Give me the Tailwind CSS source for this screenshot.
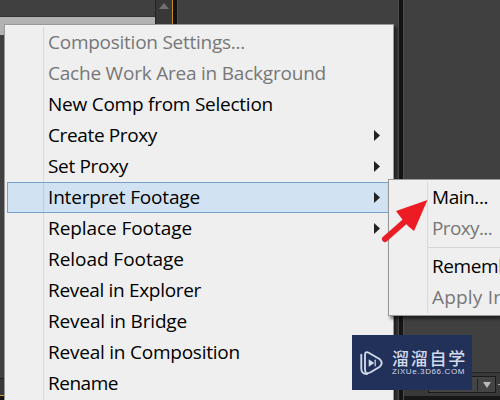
<!DOCTYPE html>
<html lang="en"><head><meta charset="utf-8"><title>Footage menu</title>
<script src="https://cdn.jsdelivr.net/npm/@tailwindcss/browser@4"></script></head>
<body class="relative h-[400px] w-[500px] overflow-hidden bg-[#404040] font-['Open_Sans','Noto_Sans',sans-serif]">
<div class="flex h-full w-full">
  <div class="flex w-[155px] shrink-0 flex-col">
    <div class="h-[17px] border-b border-[#343434]"></div>
    <div class="h-[18px] bg-[#b2b2b2]"></div>
    <div class="grow bg-[#404040]"></div>
    <div class="h-[17px] border-t border-[#222] bg-[#393939]"></div>
    <div class="h-px bg-[#c5a52c]"></div><div class="h-1 bg-[#171412]"></div>
  </div>
  <div class="w-[17px] shrink-0 border-l border-[#242424] bg-[#383838] pl-[3px] pt-[3px]"><svg class="h-[6px] w-[10px]" viewBox="0 0 10 6"><path d="M5 0 10 6H0z" fill="#707070"/></svg></div>
  <div class="w-[5px] shrink-0 border-l border-[#c28b25] bg-[#15110d]"></div>
  <div class="w-[222px] shrink-0 border-x border-[#4d4d4d] bg-[#404040]"></div>
  <div class="w-[4px] shrink-0 bg-[#141414]"></div>
  <div class="flex w-[97px] shrink-0 flex-col border-l border-[#4d4d4d]">
    <div class="grow"></div>
    <div class="flex h-[24px] items-center border-t border-[#242424] bg-[#393939] pl-[24px]">
      <div class="flex h-[17px] w-[68px] shrink-0 items-center justify-end border border-[#1b1b1b] bg-[#444]"><span class="h-[12px] border-l border-[#222]"></span><svg class="ml-[5px] mr-[4px] h-[6px] w-[8px]" viewBox="0 0 8 6"><path d="M0 0H8L4 6z" fill="#bbb"/></svg></div><span class="ml-[2px] h-px w-[2px] bg-[#aaa]"></span>
    </div>
    <div class="h-[4px] bg-[#171717]"></div>
  </div>
</div>

<div class="absolute left-[4px] top-[24px] h-[376px] w-[390px] border border-b-0 border-[#999] bg-[#efefef] pt-[2px] text-[19px] leading-[31px] [font-stretch:93%] whitespace-nowrap text-black shadow-[3px_3px_3px_rgba(0,0,0,0.5)]">
  <div class="absolute bottom-0 left-[38px] top-[2px] w-px bg-[#d5d8da]"></div>
  <div class="h-[31px] pl-[43px] text-[#777]"><span data-w="197">Composition Settings...</span></div>
  <div class="h-[31px] pl-[43px] text-[#777]"><span data-w="278">Cache Work Area in Background</span></div>
  <div class="h-[31px] pl-[43px]"><span data-w="225">New Comp from Selection</span></div>
  <div class="flex h-[31px] items-center justify-between pl-[43px] pr-[13px]"><span data-w="109">Create Proxy</span><svg class="h-[11px] w-[6px]" viewBox="0 0 6 11"><path d="M0 0 6 5.5 0 11z" fill="#222"/></svg></div>
  <div class="flex h-[31px] items-center justify-between pl-[43px] pr-[13px]"><span data-w="80">Set Proxy</span><svg class="h-[11px] w-[6px]" viewBox="0 0 6 11"><path d="M0 0 6 5.5 0 11z" fill="#222"/></svg></div>
  <div class="relative ml-[2px] flex h-[31px] items-center justify-between border border-[#789fc9] bg-[#d1e2f3] pl-[40px] pr-[12px]"><i class="absolute bottom-0 left-[35px] top-0 w-px bg-[#b8cbe0]"></i><span data-w="152">Interpret Footage</span><svg class="h-[11px] w-[6px]" viewBox="0 0 6 11"><path d="M0 0 6 5.5 0 11z" fill="#222"/></svg></div>
  <div class="flex h-[31px] items-center justify-between pl-[43px] pr-[13px]"><span data-w="144">Replace Footage</span><svg class="h-[11px] w-[6px]" viewBox="0 0 6 11"><path d="M0 0 6 5.5 0 11z" fill="#222"/></svg></div>
  <div class="h-[31px] pl-[43px]"><span data-w="136">Reload Footage</span></div>
  <div class="h-[31px] pl-[43px]"><span data-w="153">Reveal in Explorer</span></div>
  <div class="h-[31px] pl-[43px]"><span data-w="139">Reveal in Bridge</span></div>
  <div class="h-[31px] pl-[43px]"><span data-w="192">Reveal in Composition</span></div>
  <div class="pl-[43px]"><span data-w="70">Rename</span></div>
</div>

<div class="absolute left-[388px] top-[179px] h-[137px] w-[112px] overflow-hidden border border-r-0 border-[#999] bg-[#efefef] pt-[2px] text-[19px] leading-[31px] [font-stretch:93%] whitespace-nowrap text-black shadow-[2px_3px_3px_rgba(0,0,0,0.5)]">
  <div class="absolute bottom-[2px] left-[38px] top-[2px] w-px bg-[#d5d8da]"></div>
  <div class="h-[31px] pl-[43px]"><span data-w="56">Main...</span></div>
  <div class="h-[31px] pl-[43px] text-[#777]"><span data-w="60">Proxy...</span></div>
  <div class="my-[3px] ml-[39px] h-px bg-[#d5d5d5]"></div>
  <div class="h-[31px] pl-[43px]"><span data-w="95">Remember</span></div>
  <div class="h-[31px] pl-[43px] text-[#777]"><span data-w="73">Apply In</span></div>
</div>

<svg class="absolute left-[380px] top-[196px] h-[48px] w-[50px]" viewBox="380 196 50 48"><path d="M385 239 406 220.500" stroke="#e91f27" stroke-width="6" stroke-linecap="round"/><path d="M427.500 200 396 211 402 219 408 226 414 231z" fill="#ed1c24"/></svg>

<div class="absolute left-[352px] top-[335px] flex h-[55px] w-[120px] items-center bg-[#213159] text-[#d4daea]">
  <svg class="ml-[7px] h-[26px] w-[25px] shrink-0" viewBox="0 0 26 28" fill="none" stroke="#d4daea" stroke-width="2" stroke-linecap="round" stroke-linejoin="round"><path d="M6 5Q6 1 10 3L22 10Q26 14 22 18L12 24Q6 27 6 21Z"/><path d="M2 5V20Q2 26 8 26"/><path d="m10 10 6 4-6 4z" fill="#d4daea" stroke="none"/><path d="M17 11V17" stroke-width="1.300"/></svg>
  <div class="ml-[8px] whitespace-nowrap"><div class="h-[18px] text-[17px] leading-[17px] font-medium font-['Noto_Sans_CJK_SC',sans-serif]"><span data-w="75">溜溜自学</span></div><div class="h-[10px] text-[8px] leading-[10px] font-['Liberation_Sans',sans-serif]"><span data-w="73">ZiXUe.3D66.COM</span></div></div>
</div>
<script>
document.fonts.ready.then(() => document.querySelectorAll('[data-w]').forEach(e => {
  const w = e.getBoundingClientRect().width, n = e.textContent.length;
  e.style.letterSpacing = ((+e.dataset.w - w) / n) + 'px';
}));
</script>
</body></html>
